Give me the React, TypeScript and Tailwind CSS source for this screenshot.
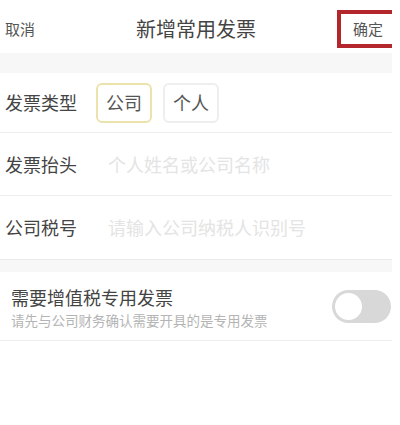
import React, { useState } from "react";

const font = { fontFamily: '"Noto Sans CJK SC", "Noto Sans", sans-serif' };

const App: React.FC = () => {
  const [type, setType] = useState<"company" | "personal">("company");
  const [special, setSpecial] = useState(false);

  return (
    <div className="w-[400px] h-[425px] bg-white" style={font}>
      <div className="w-[392px]">
        {/* 顶部导航 */}
        <div className="grid grid-cols-[1fr_auto_1fr] items-center h-[53px] pt-[5px]">
          <span className="pl-[5px] text-[15px] text-[#555]">取消</span>
          <span className="text-[20px] text-[#444]">新增常用发票</span>
          <div className="flex justify-end">
            <button className="w-[55px] h-[38px] border-[4px] border-r-0 border-[#b3262b] text-[15px] text-[#555] flex items-center justify-center pl-[3px]">
              确定
            </button>
          </div>
        </div>

        <div className="h-[20px] bg-[#f7f7f7]" />

        {/* 发票类型 */}
        <div className="flex items-center h-[60px] px-[5px] border-b border-[#eeeeee]">
          <span className="w-[91px] text-[18px] text-[#444]">发票类型</span>
          <button
            onClick={() => setType("company")}
            className={`w-[56px] h-[40px] rounded-[6px] border-2 text-[18px] text-[#555] ${
              type === "company" ? "border-[#ece2ac]" : "border-[#eeeeee]"
            }`}
          >
            公司
          </button>
          <button
            onClick={() => setType("personal")}
            className={`ml-[11px] w-[56px] h-[40px] rounded-[6px] border-2 text-[18px] text-[#555] ${
              type === "personal" ? "border-[#ece2ac]" : "border-[#eeeeee]"
            }`}
          >
            个人
          </button>
        </div>

        {/* 发票抬头 */}
        <div className="flex items-center h-[63px] px-[5px] border-b border-[#eeeeee]">
          <span className="w-[103px] shrink-0 text-[18px] text-[#444]">发票抬头</span>
          <input
            className="flex-1 min-w-0 text-[18px] outline-none placeholder:text-[#e4e4e4]"
            placeholder="个人姓名或公司名称"
          />
        </div>

        {/* 公司税号 */}
        <div className="flex items-center h-[63px] px-[5px]">
          <span className="w-[103px] shrink-0 text-[18px] text-[#444]">公司税号</span>
          <input
            className="flex-1 min-w-0 text-[18px] outline-none placeholder:text-[#e4e4e4]"
            placeholder="请输入公司纳税人识别号"
          />
        </div>

        <div className="h-[13px] bg-[#f7f7f7] border-t border-[#eaeaea]" />

        {/* 增值税专用发票 */}
        <div className="flex items-center justify-between h-[69px] pl-[11px] pr-[1px] border-b border-[#eeeeee]">
          <div className="flex flex-col pt-[2px]">
            <span className="text-[18px] leading-[24px] text-[#444]">需要增值税专用发票</span>
            <span className="text-[13.5px] leading-[18px] text-[#b4b4b4] mt-[2px]">
              请先与公司财务确认需要开具的是专用发票
            </span>
          </div>
          <button
            onClick={() => setSpecial(!special)}
            className={`w-[59px] h-[33px] rounded-full p-[3px] flex ${
              special ? "bg-[#e6c85a] justify-end" : "bg-[#d8d8d8] justify-start"
            }`}
          >
            <span className="w-[27px] h-[27px] rounded-full bg-white" />
          </button>
        </div>
      </div>
    </div>
  );
};

export default App;
